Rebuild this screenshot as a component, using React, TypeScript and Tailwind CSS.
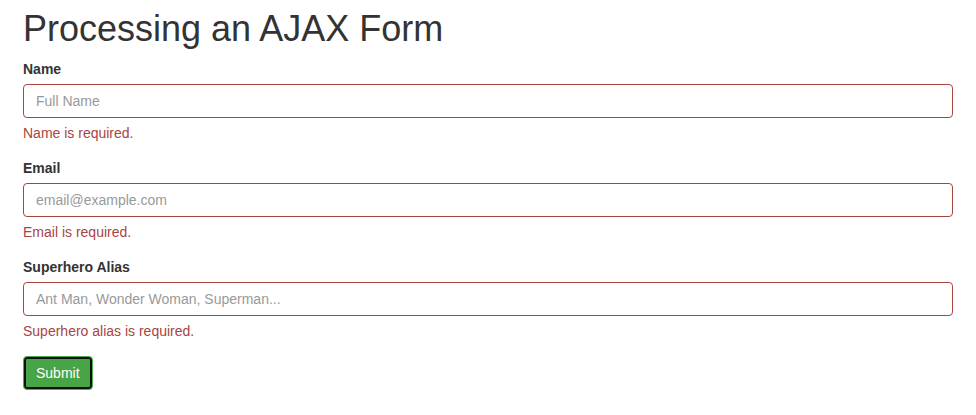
import React from "react";

function Field({ label, placeholder, error, type = "text" }: { label: string; placeholder: string; error: string; type?: string }) {
  return (
    <div className="mb-[15px]">
      <label className="block mb-[5px] text-[14px] leading-[20px] font-bold text-[#333]">{label}</label>
      <input
        type={type}
        placeholder={placeholder}
        className="block w-full h-[34px] px-[12px] py-[6px] text-[14px] leading-[20px] text-[#555] bg-white border border-[#a94442] rounded-[4px] outline-none placeholder:text-[#999]"
      />
      <div className="mt-[5px] text-[14px] leading-[20px] text-[#a94442]">{error}</div>
    </div>
  );
}

export default function App() {
  return (
    <div className="bg-white min-h-[415px] px-[23px] pt-[9px] text-[#333]" style={{ fontFamily: '"Liberation Sans", Arial, sans-serif' }}>
      <h1 className="text-[36px] leading-[39.6px] font-normal mb-[10px] text-[#333]">Processing an AJAX Form</h1>
      <form onSubmit={(e) => e.preventDefault()}>
        <Field label="Name" placeholder="Full Name" error="Name is required." />
        <Field label="Email" placeholder="email@example.com" error="Email is required." type="email" />
        <Field label="Superhero Alias" placeholder="Ant Man, Wonder Woman, Superman..." error="Superhero alias is required." />
        <button
          type="submit"
          className="h-[34px] px-[12px] text-[14px] leading-[20px] text-white bg-[#47a447] border border-[#4cae4c] rounded-[4px] shadow-[inset_0_0_0_2px_#111]"
        >
          Submit
        </button>
      </form>
    </div>
  );
}
